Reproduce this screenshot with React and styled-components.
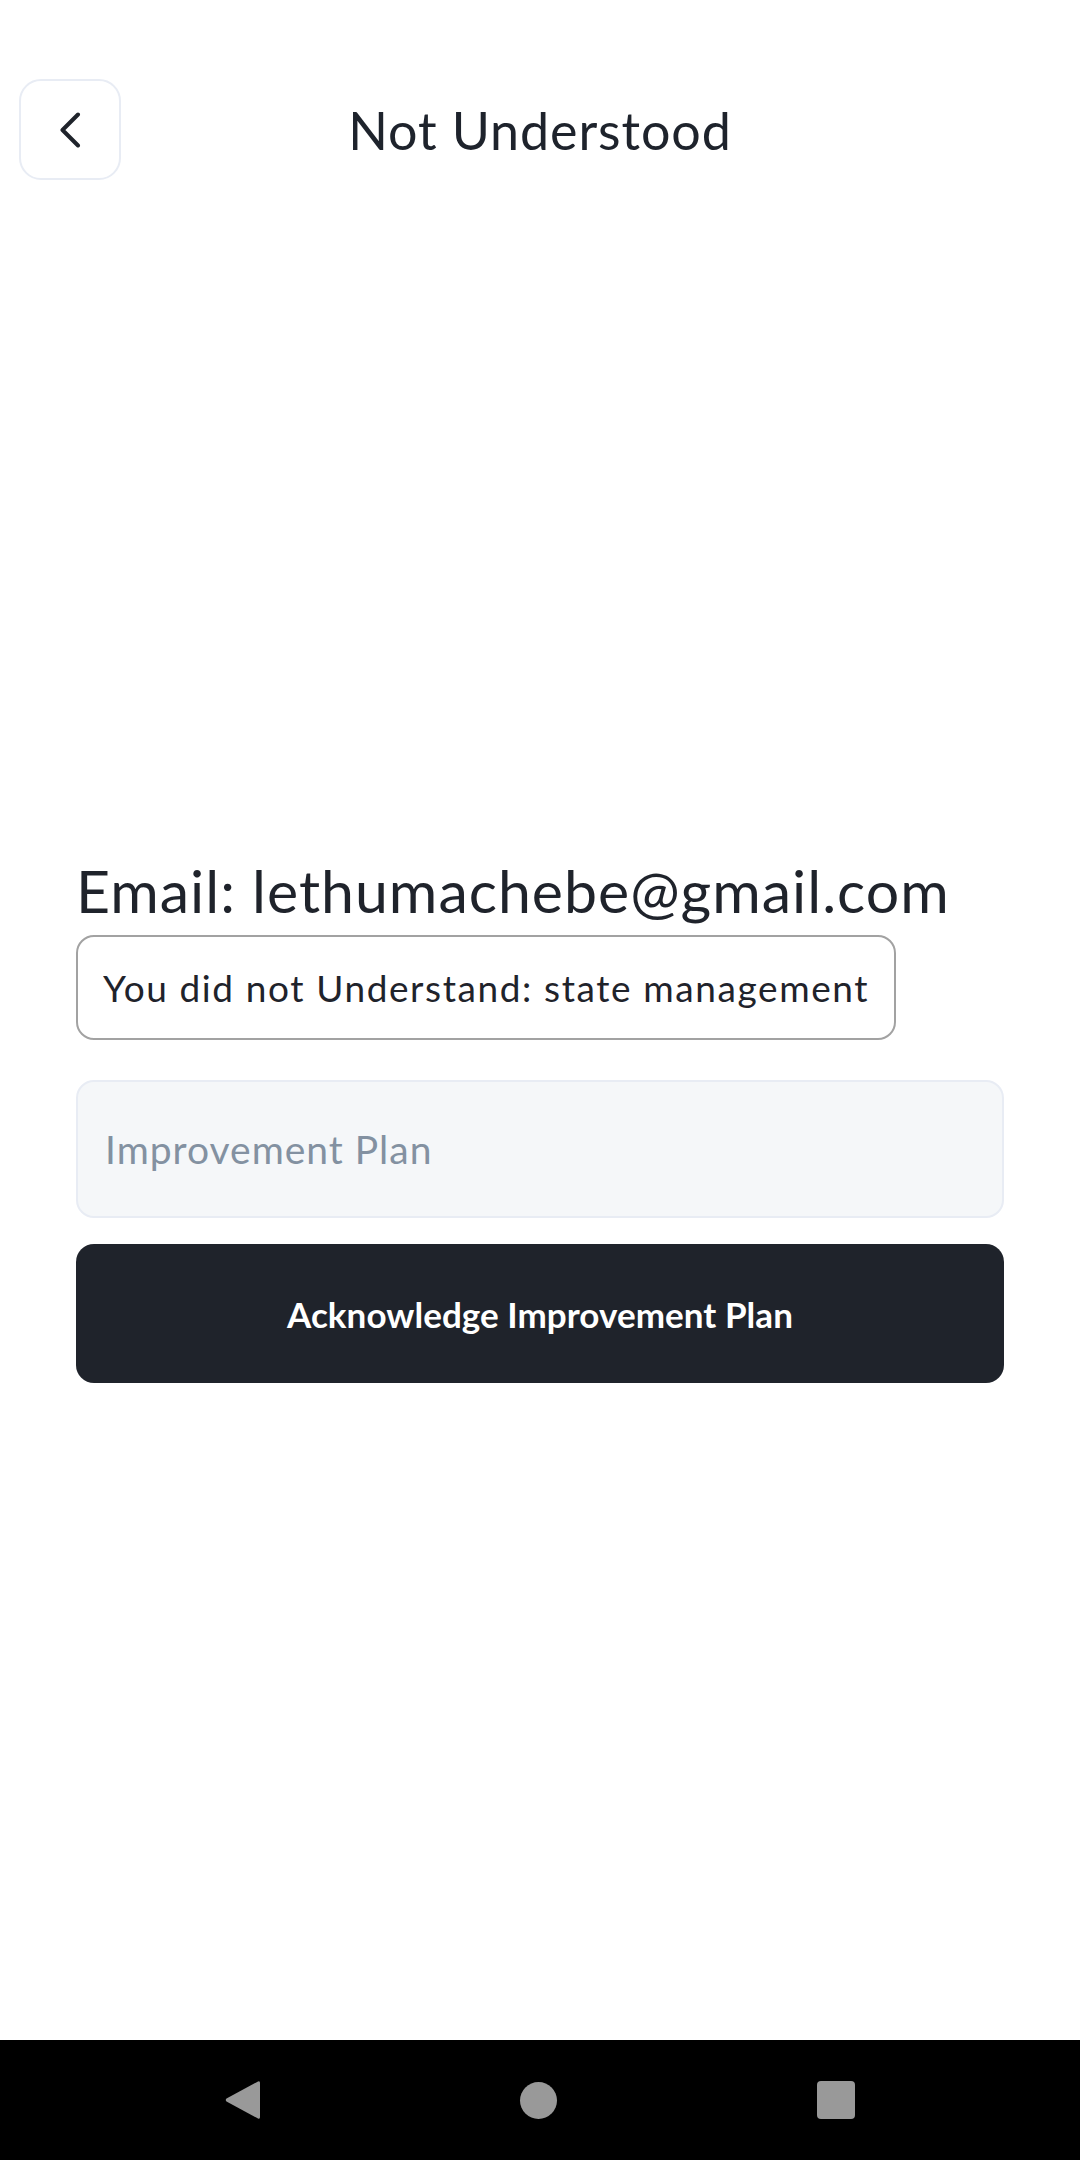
import React from "react"
import styled, { createGlobalStyle } from "styled-components"

const GlobalStyle = createGlobalStyle`
  html, body {
    margin: 0;
    padding: 0;
    background: #ffffff;
  }
  body {
    font-family: Lato, "Liberation Sans", sans-serif;
    color: #1f232b;
  }
  * {
    box-sizing: border-box;
  }
`

const Screen = styled.div`
  width: 1080px;
  min-height: 2160px;
  display: flex;
  flex-direction: column;
  background: #ffffff;
`

const Header = styled.header`
  display: grid;
  grid-template-columns: 1fr auto 1fr;
  align-items: center;
  padding: 79px 19px 0;
`

const BackButton = styled.button`
  width: 102px;
  height: 101px;
  padding: 0;
  border: 2px solid #e8ecf4;
  border-radius: 22px;
  background: #ffffff;
  display: flex;
  align-items: center;
  justify-content: center;
  cursor: pointer;
`

const Title = styled.h1`
  margin: 0;
  font-size: 52px;
  font-weight: 400;
  color: #1e232c;
  letter-spacing: 0.9px;
`

const Main = styled.main`
  flex: 1;
  padding: 675px 76px 0;
  display: flex;
  flex-direction: column;
`

const Email = styled.div`
  font-size: 59px;
  line-height: 72px;
  font-weight: 400;
  color: #1f232b;
  letter-spacing: 1px;
  margin-bottom: 8px;
`

const TopicInput = styled.input`
  width: 820px;
  height: 105px;
  padding: 0 25px;
  border: 2px solid #a2a2a2;
  border-radius: 18px;
  background: #ffffff;
  font-family: inherit;
  font-size: 37px;
  letter-spacing: 1.6px;
  color: #1f232b;
  outline: none;
  margin-bottom: 40px;
`

const PlanInput = styled.input`
  width: 100%;
  height: 138px;
  padding: 0 27px;
  border: 2px solid #e8ecf4;
  border-radius: 18px;
  background: #f5f7f9;
  font-family: inherit;
  font-size: 39px;
  letter-spacing: 1px;
  color: #1f232b;
  outline: none;
  margin-bottom: 26px;

  &::placeholder {
    color: #8391a1;
  }
`

const SubmitButton = styled.button`
  width: 100%;
  height: 139px;
  border: none;
  border-radius: 18px;
  background: #1f232b;
  color: #ffffff;
  font-family: inherit;
  font-size: 35px;
  font-weight: 700;
  letter-spacing: 0.05px;
  cursor: pointer;
`

const NavBar = styled.nav`
  height: 120px;
  background: #000000;
  display: flex;
  align-items: center;
  justify-content: center;
  gap: 260px;
`

const HomeDot = styled.span`
  width: 37px;
  height: 37px;
  border-radius: 50%;
  background: #999999;
`

const RecentsSquare = styled.span`
  width: 38px;
  height: 38px;
  border-radius: 4px;
  background: #999999;
`

export default function App() {
  return (
    <Screen>
      <GlobalStyle />
      <Header>
        <div>
          <BackButton aria-label="Back" type="button">
            <svg width="22" height="36" viewBox="0 0 22 36" fill="none">
              <polyline
                points="19,2.5 3.5,18 19,33.5"
                stroke="#1f232b"
                strokeWidth="4"
                strokeLinecap="round"
                strokeLinejoin="round"
              />
            </svg>
          </BackButton>
        </div>
        <Title>Not Understood</Title>
        <div />
      </Header>
      <Main>
        <Email>Email: lethumachebe@gmail.com</Email>
        <TopicInput
          readOnly
          defaultValue="You did not Understand: state management"
        />
        <PlanInput placeholder="Improvement Plan" />
        <SubmitButton type="button">Acknowledge Improvement Plan</SubmitButton>
      </Main>
      <NavBar>
        <svg width="35" height="40" viewBox="0 0 35 40">
          <path
            d="M33 1.5 Q35 0.5 35 3 L35 37 Q35 39.5 33 38.5 L1.5 21.5 Q0 20 1.5 18.5 Z"
            fill="#999999"
          />
        </svg>
        <HomeDot />
        <RecentsSquare />
      </NavBar>
    </Screen>
  )
}
